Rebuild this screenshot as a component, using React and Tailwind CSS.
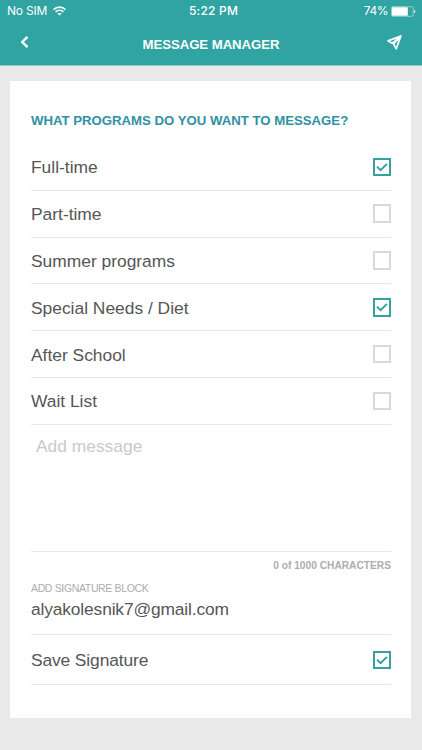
import { useState } from 'react';

const PROGRAMS = ['Full-time', 'Part-time', 'Summer programs', 'Special Needs / Diet', 'After School', 'Wait List'];

function Checkbox({ checked, onClick, label }) {
  return (
    <button
      role="checkbox"
      aria-checked={checked}
      aria-label={label}
      onClick={onClick}
      className={`flex items-center justify-center size-[18.5px] border-2 shrink-0 ${
        checked ? 'border-[#36a1a1]' : 'border-[#d9d9d9]'
      }`}
    >
      {checked && (
        <svg viewBox="0 0 14 14" className="size-[14px]" fill="none" stroke="#329c9e" strokeWidth="1.9">
          <path d="M2 6.6 L5.6 10.2 L11.9 3.9" />
        </svg>
      )}
    </button>
  );
}

function StatusBar() {
  return (
    <div className="grid grid-cols-3 items-center h-[22px] pl-[7px] pr-[6px] font-['Inter','Liberation_Sans',sans-serif] text-[12px]">
      <div className="flex items-center gap-[6px]">
        <span className="tracking-[-0.2px]">No SIM</span>
        <svg viewBox="0 0 13 10" className="w-[13px] h-[10px]" fill="none" stroke="white" strokeWidth="1.7">
          <path d="M0.6 3.6 C3.9 0.3 9.1 0.3 12.4 3.6" />
          <path d="M2.6 5.8 C4.8 3.7 8.2 3.7 10.4 5.8" />
          <path d="M6.5 9.6 L4.4 7.5 C5.6 6.5 7.4 6.5 8.6 7.5 Z" fill="white" stroke="none" />
        </svg>
      </div>
      <span className="text-center font-medium tracking-[0.2px] pl-[4px]">5:22 PM</span>
      <div className="flex items-center justify-end gap-[3px]">
        <span className="tracking-[-0.5px]">74%</span>
        <svg viewBox="0 0 26 11" className="w-[25px] h-[11px]" fill="none">
          <rect x="0.5" y="0.5" width="22.5" height="10" rx="1.5" stroke="white" strokeOpacity="0.7" strokeWidth="0.7" />
          <rect x="1" y="1" width="16.5" height="9" rx="0.8" fill="white" />
          <path d="M24 3.8 C25.6 4.2 25.6 6.8 24 7.2 Z" fill="white" />
        </svg>
      </div>
    </div>
  );
}

export default function App() {
  const [selected, setSelected] = useState(['Full-time', 'Special Needs / Diet']);
  const [message, setMessage] = useState('');
  const [saveSignature, setSaveSignature] = useState(true);

  const toggle = (name) => {
    setSelected((prev) => (prev.includes(name) ? prev.filter((p) => p !== name) : [...prev, name]));
  };

  return (
    <div className="w-[422px] h-[750px] overflow-hidden bg-[#e9e9e9] text-[#565656] font-['Liberation_Sans',Arial,sans-serif]">
      {/* Header */}
      <header className="h-[66px] bg-[#30a3a3] border-b border-[#8fcaca] text-white">
        <StatusBar />
        <div className="flex items-center justify-between h-[40px] pl-[20px] pr-[20px]">
          <button aria-label="Back" className="w-[14px]">
            <svg viewBox="0 0 9 12" className="w-[9px] h-[12px]" fill="none" stroke="white" strokeWidth="2.4">
              <path d="M7.5 0.8 L2.3 6 L7.5 11.2" />
            </svg>
          </button>
          <h1 className="text-[13.2px] font-bold leading-[16px] pt-[5px] pl-[1px] tracking-[-0.05px]">MESSAGE MANAGER</h1>
          <button aria-label="Send">
            <svg viewBox="0 0 15 15" className="size-[15px]" fill="none" stroke="white" strokeWidth="1.7" strokeLinejoin="round">
              <path d="M13.8 1.1 L1 5.9 L5.2 8.3 Z" />
              <path d="M13.8 1.1 L6.6 9 L9.3 13.8 Z" />
            </svg>
          </button>
        </div>
      </header>

      {/* Card */}
      <main className="mt-[15px] ml-[10.4px] w-[401px] h-[637px] bg-white pl-[20.6px] pr-[20.4px] pt-[29px]">
        <h2 className="h-[34px] pt-[1px] text-[13.2px] leading-[20px] font-bold text-[#3090a4] whitespace-nowrap">
          WHAT PROGRAMS DO YOU WANT TO MESSAGE?
        </h2>

        <ul>
          {PROGRAMS.map((name) => (
            <li key={name} className="flex items-center justify-between h-[46.8px] border-b border-[#e6e6e6]">
              <span className="text-[17.4px] pt-[1px]">{name}</span>
              <Checkbox checked={selected.includes(name)} onClick={() => toggle(name)} label={name} />
            </li>
          ))}
        </ul>

        <textarea
          value={message}
          onChange={(e) => setMessage(e.target.value)}
          maxLength={1000}
          placeholder="Add message"
          className="block w-full h-[127px] pl-[5px] pt-[9px] text-[17.4px] leading-[25px] resize-none outline-none border-b border-[#e6e6e6] placeholder:text-[#c9c9ce]"
        />
        <div className="h-[28px] pt-[6px] text-right text-[10.2px] leading-[15px] font-bold text-[#adadad]">
          {message.length} of 1000 CHARACTERS
        </div>

        {/* Signature */}
        <div className="h-[55px] border-b border-[#e6e6e6]">
          <div className="h-[18px] text-[10.5px] leading-[17px] tracking-[-0.35px] text-[#adadad]">ADD SIGNATURE BLOCK</div>
          <div className="text-[17.4px] leading-[22px] tracking-[-0.15px]">alyakolesnik7@gmail.com</div>
        </div>
        <div className="flex items-center justify-between h-[50px] border-b border-[#e6e6e6]">
          <span className="text-[17.4px] pt-[2px] tracking-[-0.12px]">Save Signature</span>
          <div className="pt-[1px]">
            <Checkbox checked={saveSignature} onClick={() => setSaveSignature(!saveSignature)} label="Save Signature" />
          </div>
        </div>
      </main>
    </div>
  );
}
